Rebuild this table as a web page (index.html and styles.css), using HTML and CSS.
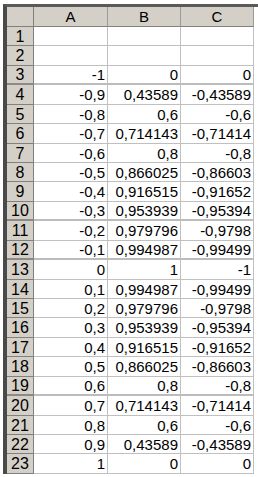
FILE: index.html
```html
<!DOCTYPE html>
<html>
<head>
<meta charset="utf-8">
<link rel="stylesheet" href="styles.css">
</head>
<body>
<div class="sheet">
  <div class="row head"><div class="rh"></div><div class="ch">A</div><div class="ch">B</div><div class="ch">C</div></div>
  <div class="row"><div class="rh">1</div><div class="c"></div><div class="c"></div><div class="c"></div></div>
  <div class="row tall"><div class="rh">2</div><div class="c"></div><div class="c"></div><div class="c"></div></div>
  <div class="row thick"><div class="rh">3</div><div class="c">-1</div><div class="c">0</div><div class="c">0</div></div>
  <div class="row tall"><div class="rh">4</div><div class="c">-0,9</div><div class="c">0,43589</div><div class="c">-0,43589</div></div>
  <div class="row"><div class="rh">5</div><div class="c">-0,8</div><div class="c">0,6</div><div class="c">-0,6</div></div>
  <div class="row tall"><div class="rh">6</div><div class="c">-0,7</div><div class="c">0,714143</div><div class="c">-0,71414</div></div>
  <div class="row"><div class="rh">7</div><div class="c">-0,6</div><div class="c">0,8</div><div class="c">-0,8</div></div>
  <div class="row"><div class="rh">8</div><div class="c">-0,5</div><div class="c">0,866025</div><div class="c">-0,86603</div></div>
  <div class="row tall"><div class="rh">9</div><div class="c">-0,4</div><div class="c">0,916515</div><div class="c">-0,91652</div></div>
  <div class="row thick"><div class="rh">10</div><div class="c">-0,3</div><div class="c">0,953939</div><div class="c">-0,95394</div></div>
  <div class="row tall"><div class="rh">11</div><div class="c">-0,2</div><div class="c">0,979796</div><div class="c">-0,9798</div></div>
  <div class="row thick"><div class="rh">12</div><div class="c">-0,1</div><div class="c">0,994987</div><div class="c">-0,99499</div></div>
  <div class="row tall"><div class="rh">13</div><div class="c">0</div><div class="c">1</div><div class="c">-1</div></div>
  <div class="row"><div class="rh">14</div><div class="c">0,1</div><div class="c">0,994987</div><div class="c">-0,99499</div></div>
  <div class="row"><div class="rh">15</div><div class="c">0,2</div><div class="c">0,979796</div><div class="c">-0,9798</div></div>
  <div class="row tall"><div class="rh">16</div><div class="c">0,3</div><div class="c">0,953939</div><div class="c">-0,95394</div></div>
  <div class="row"><div class="rh">17</div><div class="c">0,4</div><div class="c">0,916515</div><div class="c">-0,91652</div></div>
  <div class="row tall"><div class="rh">18</div><div class="c">0,5</div><div class="c">0,866025</div><div class="c">-0,86603</div></div>
  <div class="row thick"><div class="rh">19</div><div class="c">0,6</div><div class="c">0,8</div><div class="c">-0,8</div></div>
  <div class="row tall"><div class="rh">20</div><div class="c">0,7</div><div class="c">0,714143</div><div class="c">-0,71414</div></div>
  <div class="row"><div class="rh">21</div><div class="c">0,8</div><div class="c">0,6</div><div class="c">-0,6</div></div>
  <div class="row"><div class="rh">22</div><div class="c">0,9</div><div class="c">0,43589</div><div class="c">-0,43589</div></div>
  <div class="row tall"><div class="rh">23</div><div class="c">1</div><div class="c">0</div><div class="c">0</div></div>
</div>
</body>
</html>
```
FILE: styles.css
```css
html, body {
  margin: 0;
  padding: 0;
  background: #ffffff;
}
body {
  font-family: "Liberation Sans", Arial, sans-serif;
  font-size: 15px;
  color: #000;
}
.sheet {
  margin: 4px 0 0 3px;
  width: 251px;
  border-top: 3px solid #5a5a5a;
  border-left: 4px solid #4a4a4a;
}
.row {
  display: grid;
  grid-template-columns: 27px 74px 73px 73px;
  height: 19px;
}
.row.head { height: 20px; }
.row.tall { height: 20px; }
.row > div {
  box-sizing: border-box;
  border-right: 1px solid #c0c0c0;
  border-bottom: 1px solid #c0c0c0;
  display: flex;
  align-items: center;
  line-height: 17px;
  white-space: nowrap;
  overflow: hidden;
}
.row.thick > div { border-bottom: 2px solid #bcbcbc; }
.rh, .ch {
  background: #d4d0c8;
  justify-content: center;
}
.row > .rh { border-right-color: #808080; border-bottom-color: #808080; font-size: 16px; }
.row.thick > .rh { border-bottom: 2px solid #8a8a8a; }
.row.head > div { border-bottom-color: #808080; border-right-color: #808080; }
.row.head > .ch { border-right-color: #9a9a9a; }
.c {
  justify-content: flex-end;
  padding-right: 2px;
}
```
